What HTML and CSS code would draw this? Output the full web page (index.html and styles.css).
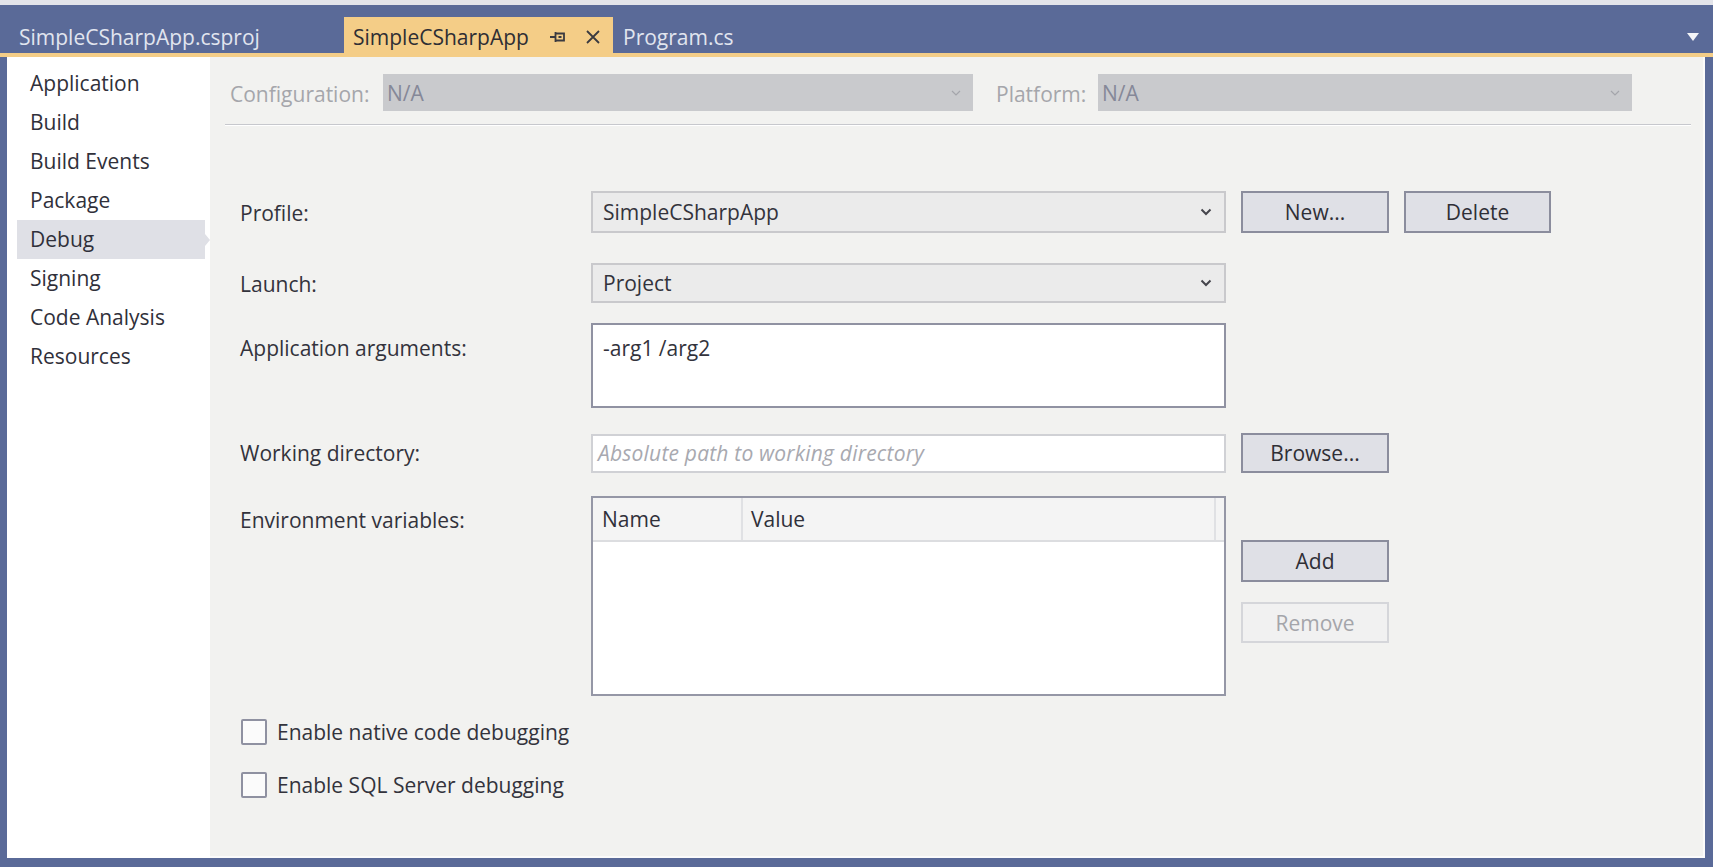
FILE: index.html
```html
<!DOCTYPE html>
<html>
<head>
<meta charset="utf-8">
<title>SimpleCSharpApp</title>
<link rel="stylesheet" href="styles.css">
</head>
<body>
<div class="window">
  <div class="topband"></div>
  <div class="tabstrip">
    <div class="tab tab-csproj">SimpleCSharpApp.csproj</div>
    <div class="tab tab-active">
      <span class="tab-title">SimpleCSharpApp</span>
      <svg class="pin" width="17" height="16" viewBox="0 0 17 16"><path d="M0 8H5M5.5 3V13M6 4.5H14V11.5H6M8.5 8H11.5" fill="none" stroke="#3a3a40" stroke-width="1.8"/></svg>
      <svg class="close" width="16" height="16" viewBox="0 0 16 16"><path d="M2 2L14 14M14 2L2 14" stroke="#3a3a40" stroke-width="1.8"/></svg>
    </div>
    <div class="tab tab-program">Program.cs</div>
    <div class="tab-spacer"></div>
    <div class="overflow"><svg width="12" height="8" viewBox="0 0 12 8"><path d="M0 0H12L6 8Z" fill="#f4f5f8"/></svg></div>
  </div>
  <div class="accent"></div>
  <div class="frame">
    <nav class="sidebar">
      <div class="nav-item">Application</div>
      <div class="nav-item">Build</div>
      <div class="nav-item">Build Events</div>
      <div class="nav-item">Package</div>
      <div class="nav-item selected">Debug</div>
      <div class="nav-item">Signing</div>
      <div class="nav-item">Code Analysis</div>
      <div class="nav-item">Resources</div>
    </nav>
    <main class="content">
      <div class="config-row">
        <span class="config-label">Configuration:</span>
        <div class="select disabled config-select"><span>N/A</span><svg class="chev" width="10" height="6" viewBox="0 0 10 6"><path d="M1 1L5 5L9 1" fill="none" stroke="#a4a5ab" stroke-width="1.2"/></svg></div>
        <span class="config-label platform-label">Platform:</span>
        <div class="select disabled platform-select"><span>N/A</span><svg class="chev" width="10" height="6" viewBox="0 0 10 6"><path d="M1 1L5 5L9 1" fill="none" stroke="#a4a5ab" stroke-width="1.2"/></svg></div>
      </div>
      <div class="separator"></div>

      <div class="form">
        <div class="row row-profile">
          <label class="lbl">Profile:</label>
          <div class="select"><span>SimpleCSharpApp</span><svg class="chev" width="12" height="8" viewBox="0 0 12 8"><path d="M1.5 1.5L6 6L10.5 1.5" fill="none" stroke="#45454c" stroke-width="2"/></svg></div>
          <button class="btn">New...</button>
          <button class="btn">Delete</button>
        </div>
        <div class="row row-launch">
          <label class="lbl">Launch:</label>
          <div class="select"><span>Project</span><svg class="chev" width="12" height="8" viewBox="0 0 12 8"><path d="M1.5 1.5L6 6L10.5 1.5" fill="none" stroke="#45454c" stroke-width="2"/></svg></div>
        </div>
        <div class="row row-args">
          <label class="lbl lbl-top">Application arguments:</label>
          <div class="textarea">-arg1 /arg2</div>
        </div>
        <div class="row row-wd">
          <label class="lbl">Working directory:</label>
          <div class="input"><span class="placeholder">Absolute path to working directory</span></div>
          <button class="btn">Browse...</button>
        </div>
        <div class="row row-env">
          <label class="lbl lbl-top">Environment variables:</label>
          <div class="table">
            <div class="thead">
              <div class="th th-name">Name</div>
              <div class="th th-value">Value</div>
              <div class="th th-rest"></div>
            </div>
          </div>
          <div class="env-buttons">
            <button class="btn">Add</button>
            <button class="btn btn-disabled">Remove</button>
          </div>
        </div>
        <div class="check check-first"><span class="box"></span><span>Enable native code debugging</span></div>
        <div class="check check-second"><span class="box"></span><span>Enable SQL Server debugging</span></div>
      </div>
    </main>
  </div>
</div>
</body>
</html>
```

FILE: styles.css
```css
* { box-sizing: border-box; }
html, body { margin: 0; padding: 0; }
body {
  width: 1713px;
  height: 867px;
  overflow: hidden;
  background: #5a6a98;
  font-family: "Segoe UI", "Open Sans", sans-serif;
  font-size: 21px;
  color: #33333c;
}
.window { display: flex; flex-direction: column; height: 867px; }
.topband { height: 5px; background: #e3e4ea; }

.tabstrip {
  height: 48px;
  display: flex;
  align-items: flex-end;
  padding-left: 8px;
  background: #5a6a98;
}
.tab {
  height: 36px;
  display: flex;
  align-items: center;
  padding-top: 3px;
  color: #e1e5ef;
  white-space: nowrap;
}
.tab-csproj { width: 336px; padding-left: 11px; }
.tab-active {
  width: 269px;
  background: #f4cd87;
  color: #2e2e34;
  padding-left: 9px;
}
.tab-title { width: 197px; }
.pin { margin-right: 18px; }
.tab-program { width: 200px; padding-left: 10px; }
.tab-spacer { flex: 1; }
.overflow {
  height: 36px;
  display: flex;
  align-items: center;
  padding-top: 3px;
  margin-right: 14px;
}
.accent { height: 4px; background: #f4cd87; }

.frame { flex: 1; display: flex; padding: 0 8px 9px 7px; min-height: 0; }
.sidebar { width: 203px; background: #ffffff; padding-top: 7px; }
.nav-item {
  height: 39px;
  line-height: 39px;
  padding-left: 23px;
  color: #30303a;
  position: relative;
}
.nav-item.selected {
  background: #dfe0e6;
  margin: 0 5px 0 10px;
  padding-left: 13px;
}
.nav-item.selected::after {
  content: "";
  position: absolute;
  right: -5px;
  top: 14px;
  border-left: 5px solid #dfe0e6;
  border-top: 6px solid transparent;
  border-bottom: 6px solid transparent;
}

.content {
  flex: 1;
  background: #f2f2f0;
  border-right: 2px solid #fbfbfb;
  border-bottom: 2px solid #fbfbfb;
  padding: 17px 0 0 20px;
}
.config-row { display: flex; align-items: center; height: 37px; }
.config-label { color: #a5a6ab; width: 153px; white-space: nowrap; padding-top: 2px; }
.platform-label { width: 102px; margin-left: 23px; }
.select {
  display: flex;
  align-items: center;
  justify-content: space-between;
  padding: 0 12px 0 10px;
  background: #ebebeb;
  border: 2px solid #c9c9cc;
  height: 100%;
}
.select.disabled {
  background: #c9cacd;
  border: none;
  color: #858898;
  padding-left: 4px;
}
.config-select { width: 590px; height: 37px; }
.platform-select { width: 534px; height: 37px; }
.separator {
  margin: 13px 0 0 -5px;
  width: 1466px;
  height: 2px;
  border-top: 1px solid #c7c8cd;
  border-bottom: 1px solid #ffffff;
}

.form { padding-left: 10px; margin-top: 65px; }
.row {
  display: grid;
  grid-template-columns: 336px 635px 148px 147px;
  column-gap: 15px;
  align-items: center;
}
.row-profile { height: 42px; }
.row-profile .btn { height: 42px; }
.row-launch { height: 40px; margin-top: 30px; }
.row-args { height: 85px; margin-top: 20px; align-items: start; }
.row-wd { height: 40px; margin-top: 25px; }
.row-env { height: 200px; margin-top: 23px; align-items: start; }
.lbl { color: #33333c; white-space: nowrap; }
.row-profile .lbl, .row-launch .lbl { padding-top: 2px; }
.lbl-top { padding-top: 10px; }
.row-args .lbl-top { padding-top: 11px; }

.textarea {
  height: 85px;
  background: #ffffff;
  border: 2px solid #9092a2;
  padding: 9px 10px;
  line-height: 28px;
}
.input {
  height: 39px;
  background: #ffffff;
  border: 2px solid #d0d1d5;
  display: flex;
  align-items: center;
  padding-left: 5px;
}
.placeholder { color: #a8a9b0; font-style: italic; letter-spacing: 0.2px; }

.btn {
  font: inherit;
  color: #2f2f36;
  height: 40px;
  background: #dfe0e6;
  border: 2px solid #8b8d9d;
  padding: 0;
  margin: 0;
}
.btn-disabled {
  background: #f1f1f1;
  border-color: #d5d6da;
  color: #a4a5aa;
}

.table {
  height: 200px;
  background: #ffffff;
  border: 2px solid #9597a6;
}
.thead {
  display: flex;
  height: 44px;
  background: #f4f4f4;
  border-bottom: 2px solid #dcdde0;
}
.th { display: flex; align-items: center; color: #30303a; }
.th-name { width: 150px; padding-left: 9px; border-right: 2px solid #e0e1e4; }
.th-value { flex: 1; padding-left: 8px; border-right: 2px solid #e0e1e4; }
.th-rest { width: 8px; }

.env-buttons {
  display: flex;
  flex-direction: column;
  gap: 20px;
  padding-top: 44px;
}
.env-buttons .btn { height: 42px; }
.env-buttons .btn-disabled { height: 41px; }

.check { display: flex; align-items: center; height: 27px; }
.check-first { margin-top: 22px; }
.check-second { margin-top: 26px; }
.box {
  width: 26px;
  height: 26px;
  background: #fbfbfb;
  border: 2px solid #8f91a1;
  border-radius: 2px;
  margin-right: 10px;
  margin-left: 1px;
}
```
